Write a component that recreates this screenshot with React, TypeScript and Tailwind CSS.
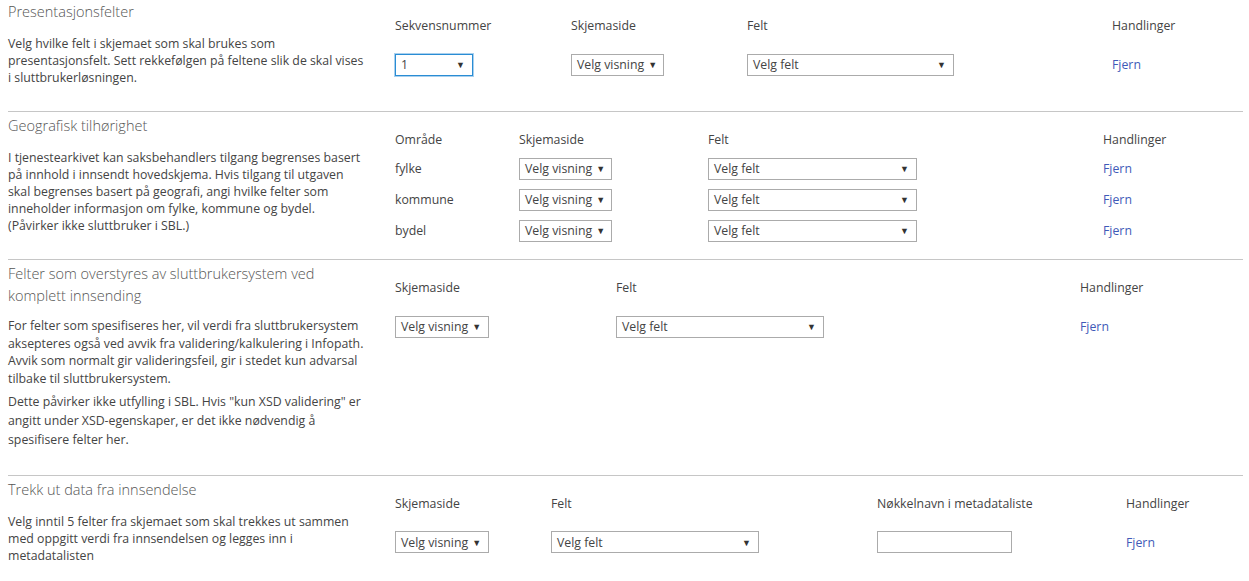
import type { ReactNode } from "react";

const font = { fontFamily: '"Segoe UI", "Open Sans", "Noto Sans", sans-serif' };

function Select({ label, width, focused = false }: { label: string; width: string; focused?: boolean }) {
  return (
    <div
      className={`flex h-[22px] items-center justify-between bg-white pl-[5px] pr-[7px] text-[12.3px] text-[#444] ${width} ${
        focused ? "border border-[#2a8dd4] shadow-[0_0_0_1px_#a9d0ee]" : "border border-[#ababab]"
      }`}
    >
      <span className="whitespace-nowrap">{label}</span>
      <span className="ml-1 text-[9px] leading-none text-[#333]">▼</span>
    </div>
  );
}

function Link() {
  return <a className="block cursor-pointer text-[12.3px] leading-[17px] text-[#3f5ab8]">Fjern</a>;
}

type Column = { label: string; width: string };

function Section({
  title,
  children,
  columns,
  rows,
  rowClass,
  headClass,
  pad,
  descClass = "mt-[12px]",
}: {
  title: ReactNode;
  children: ReactNode;
  columns: Column[];
  rows: ReactNode[][];
  rowClass: string;
  headClass: string;
  pad: string;
  descClass?: string;
}) {
  return (
    <section className={`flex ${pad}`}>
      <div className="w-[387px] shrink-0">
        <h2 className="pt-[3px] text-[14.5px] font-light leading-[22px] text-[#555]">{title}</h2>
        <div className={`w-[359px] text-[12.3px] leading-[17px] text-[#444] ${descClass}`}>{children}</div>
      </div>
      <div className="flex-1 pt-[19px]">
        <div className="flex text-[12.3px] leading-[17px] text-[#444]">
          {columns.map((c) => (
            <div key={c.label} className={c.width}>
              {c.label}
            </div>
          ))}
        </div>
        <div className={headClass}>
          {rows.map((r, i) => (
            <div key={i} className={`flex items-center ${rowClass}`}>
              {r.map((cell, j) => (
                <div key={j} className={`flex items-center leading-[17px] ${columns[j].width}`}>
                  {cell}
                </div>
              ))}
            </div>
          ))}
        </div>
      </div>
    </section>
  );
}

export default function App() {
  return (
    <div className="min-h-screen bg-white pl-2 pr-[6px]" style={font}>
      <div className="-mt-[2px]">
        <Section
          title="Presentasjonsfelter"
          pad="pb-[25px]"
          headClass="mt-[20px]"
          rowClass="h-[21px]"
          columns={[
            { label: "Sekvensnummer", width: "w-[176px]" },
            { label: "Skjemaside", width: "w-[176px]" },
            { label: "Felt", width: "w-[365px]" },
            { label: "Handlinger", width: "flex-1" },
          ]}
          rows={[
            [
              <Select label="1" width="w-[78px]" focused />,
              <Select label="Velg visning" width="w-[93px]" />,
              <Select label="Velg felt" width="w-[207px]" />,
              <Link />,
            ],
          ]}
        >
          Velg hvilke felt i skjemaet som skal brukes som presentasjonsfelt. Sett rekkefølgen på feltene slik de
          skal vises i sluttbrukerløsningen.
        </Section>
      </div>

      <div className="border-t border-[#c6c6c6]">
        <Section
          title="Geografisk tilhørighet"
          pad="pb-[13px]"
          headClass="mt-[5px]"
          rowClass="h-[31px]"
          columns={[
            { label: "Område", width: "w-[124px]" },
            { label: "Skjemaside", width: "w-[189px]" },
            { label: "Felt", width: "w-[395px]" },
            { label: "Handlinger", width: "flex-1" },
          ]}
          rows={["fylke", "kommune", "bydel"].map((a) => [
            <span className="text-[12.3px] text-[#444]">{a}</span>,
            <Select label="Velg visning" width="w-[93px]" />,
            <Select label="Velg felt" width="w-[209px]" />,
            <Link />,
          ])}
        >
          I tjenestearkivet kan saksbehandlers tilgang begrenses basert på innhold i innsendt hovedskjema. Hvis
          tilgang til utgaven skal begrenses basert på geografi, angi hvilke felter som inneholder informasjon om
          fylke, kommune og bydel. (Påvirker ikke sluttbruker i SBL.)
        </Section>
      </div>

      <div className="border-t border-[#c6c6c6]">
        <Section
          title={
            <>
              Felter som overstyres av sluttbrukersystem ved
              <br />
              komplett innsending
            </>
          }
          pad="pb-[26px]"
          descClass="mt-[10px]"
          headClass="mt-[20px]"
          rowClass="h-[21px]"
          columns={[
            { label: "Skjemaside", width: "w-[221px]" },
            { label: "Felt", width: "w-[464px]" },
            { label: "Handlinger", width: "flex-1" },
          ]}
          rows={[
            [
              <Select label="Velg visning" width="w-[94px]" />,
              <Select label="Velg felt" width="w-[208px]" />,
              <Link />,
            ],
          ]}
        >
          <p className="leading-[17.7px]">
            For felter som spesifiseres her, vil verdi fra sluttbrukersystem aksepteres også ved avvik fra
            validering/kalkulering i Infopath. Avvik som normalt gir valideringsfeil, gir i stedet kun advarsal
            tilbake til sluttbrukersystem.
          </p>
          <p className="mt-[4px] leading-[19px]">
            Dette påvirker ikke utfylling i SBL. Hvis "kun XSD validering" er angitt under XSD-egenskaper, er det
            ikke nødvendig å spesifisere felter her.
          </p>
        </Section>
      </div>

      <div className="border-t border-[#c6c6c6]">
        <Section
          title="Trekk ut data fra innsendelse"
          pad="pb-[24px]"
          headClass="mt-[20px]"
          rowClass="h-[21px]"
          columns={[
            { label: "Skjemaside", width: "w-[156px]" },
            { label: "Felt", width: "w-[326px]" },
            { label: "Nøkkelnavn i metadataliste", width: "w-[249px]" },
            { label: "Handlinger", width: "flex-1" },
          ]}
          rows={[
            [
              <Select label="Velg visning" width="w-[94px]" />,
              <Select label="Velg felt" width="w-[208px]" />,
              <input className="h-[22px] w-[135px] border border-[#ababab] bg-white px-1 text-[12.3px] outline-none" />,
              <Link />,
            ],
          ]}
        >
          Velg inntil 5 felter fra skjemaet som skal trekkes ut sammen med oppgitt verdi fra innsendelsen og legges
          inn i metadatalisten
        </Section>
      </div>
    </div>
  );
}
